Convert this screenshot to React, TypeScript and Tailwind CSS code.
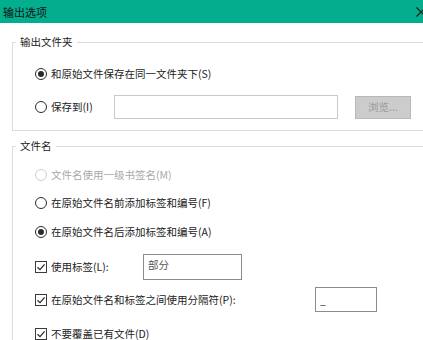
import React from 'react';

const Radio: React.FC<{ checked?: boolean; disabled?: boolean }> = ({ checked, disabled }) => (
  <span
    className={`flex h-[12px] w-[12px] shrink-0 items-center justify-center rounded-full border-[1.5px] bg-white ${
      disabled ? 'border-[#cfcfcf]' : 'border-[#2b2b2b]'
    }`}
  >
    {checked && <span className="h-[6px] w-[6px] rounded-full bg-[#2b2b2b]" />}
  </span>
);

const Checkbox: React.FC = () => (
  <span className="flex h-[12px] w-[12px] shrink-0 items-center justify-center border border-[#3a3a3a] bg-white">
    <svg viewBox="0 0 10 10" className="h-[10px] w-[10px]">
      <path d="M1.5 5.2 L4 7.6 L8.6 2.4" fill="none" stroke="#2b2b2b" strokeWidth="1.3" />
    </svg>
  </span>
);

const Option: React.FC<{
  control: React.ReactNode;
  label: string;
  disabled?: boolean;
  labelClass?: string;
  children?: React.ReactNode;
  className?: string;
}> = ({ control, label, disabled, labelClass = '', children, className = '' }) => (
  <div className={`flex items-center ${className}`}>
    {control}
    <span className={`ml-[4px] whitespace-nowrap ${disabled ? 'text-[#a8a8a8]' : 'text-[#222]'} ${labelClass}`}>
      {label}
    </span>
    {children}
  </div>
);

export default function App() {
  return (
    <div
      className="h-[340px] w-[423px] overflow-hidden bg-white text-[10.5px] leading-[14px]"
      style={{ fontFamily: '"Noto Sans CJK SC", "Noto Sans", sans-serif' }}
    >
      {/* Title bar */}
      <div className="flex h-[23px] items-center bg-[#03ae8e] pl-[3px]">
        <span className="text-[11px] text-[#111]">输出选项</span>
        <svg viewBox="0 0 10 10" className="ml-auto mr-[-3px] h-[10px] w-[10px]">
          <path d="M0.5 0.5 L9.5 9.5 M9.5 0.5 L0.5 9.5" stroke="#1a1a1a" strokeWidth="1.2" />
        </svg>
      </div>

      <div className="pl-[12px]">
        {/* Output folder */}
        <fieldset className="mt-[12px] w-[440px] border border-[#dcdcdc]">
          <legend className="ml-[3px] px-[4px] text-[#222]">输出文件夹</legend>
          <div className="pl-[22px] pt-[13px] pb-[11px]">
            <Option className="h-[24px]" control={<Radio checked />} label="和原始文件保存在同一文件夹下(S)" />
            <Option className="mt-[9px] h-[24px]" control={<Radio />} label="保存到(I)" labelClass="w-[63px]">
              <div className="h-[24px] w-[224px] border border-[#c9c9c9] bg-white" />
              <button className="ml-[17px] h-[23px] w-[56px] border border-[#b8b8b8] bg-[#cccccc] text-[10.5px] text-[#9a9a9a]">
                浏览...
              </button>
            </Option>
          </div>
        </fieldset>

        {/* File name */}
        <fieldset className="mt-[8px] w-[440px] border border-[#dcdcdc]">
          <legend className="ml-[3px] px-[4px] text-[#222]">文件名</legend>
          <div className="pl-[22px] pt-[12px] pb-[20px]">
            <Option className="h-[20px]" control={<Radio disabled />} label="文件名使用一级书签名(M)" disabled />
            <Option className="mt-[8px] h-[20px]" control={<Radio />} label="在原始文件名前添加标签和编号(F)" />
            <Option className="mt-[9px] h-[20px]" control={<Radio checked />} label="在原始文件名后添加标签和编号(A)" />
            <Option className="mt-[12px] h-[26px]" control={<Checkbox />} label="使用标签(L):" labelClass="w-[92px]">
              <div className="h-[26px] w-[99px] border border-[#8c8c8c] bg-white px-[4px] pt-[3px] text-[#555]">
                部分
              </div>
            </Option>
            <Option
              className="mt-[7px] h-[25px]"
              control={<Checkbox />}
              label="在原始文件名和标签之间使用分隔符(P):"
              labelClass="w-[264px]"
            >
              <div className="flex h-[25px] w-[62px] items-center border border-[#8c8c8c] bg-white px-[4px] text-[#333]">
                _
              </div>
            </Option>
            <Option className="mt-[12px] h-[20px]" control={<Checkbox />} label="不要覆盖已有文件(D)" />
          </div>
        </fieldset>
      </div>
    </div>
  );
}
